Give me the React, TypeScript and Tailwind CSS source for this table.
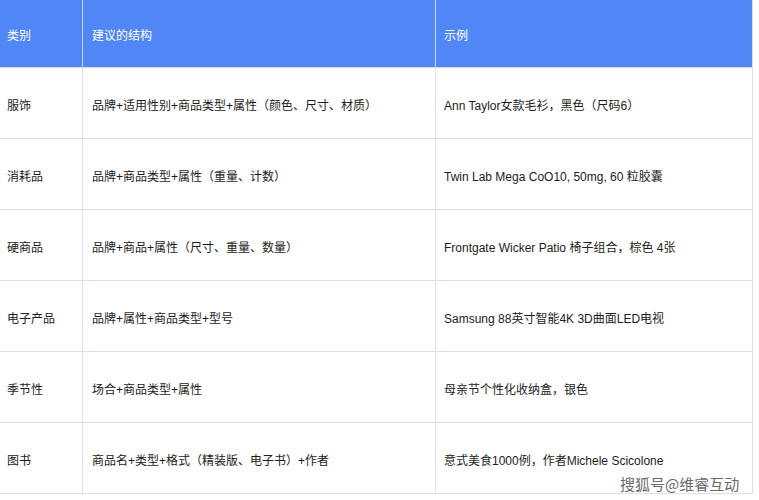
import React from "react";

const rows: [string, string, string][] = [
  ["服饰", "品牌+适用性别+商品类型+属性（颜色、尺寸、材质）", "Ann Taylor女款毛衫，黑色（尺码6）"],
  ["消耗品", "品牌+商品类型+属性（重量、计数）", "Twin Lab Mega CoO10, 50mg, 60 粒胶囊"],
  ["硬商品", "品牌+商品+属性（尺寸、重量、数量）", "Frontgate Wicker Patio 椅子组合，棕色 4张"],
  ["电子产品", "品牌+属性+商品类型+型号", "Samsung 88英寸智能4K 3D曲面LED电视"],
  ["季节性", "场合+商品类型+属性", "母亲节个性化收纳盒，银色"],
  ["图书", "商品名+类型+格式（精装版、电子书）+作者", "意式美食1000例，作者Michele Scicolone"],
];

export default function App() {
  return (
    <div
      className="relative w-[759px] h-[500px] bg-white overflow-hidden text-[12px] text-[#1c1c1c]"
      style={{ fontFamily: '"Liberation Sans", "Noto Sans CJK SC", sans-serif' }}
    >
      <div className="w-[753px] grid grid-cols-[83px_353px_317px]">
        <div className="h-[68px] bg-[#5086f6] text-white flex items-center pt-[4px] pl-[7px] border-r border-r-[#c9d6f5] border-b border-b-[#d9dce4]">类别</div>
        <div className="h-[68px] bg-[#5086f6] text-white flex items-center pt-[4px] pl-[9px] border-r border-r-[#c9d6f5] border-b border-b-[#d9dce4]">建议的结构</div>
        <div className="h-[68px] bg-[#5086f6] text-white flex items-center pt-[4px] pl-[8px] border-r border-r-[#d9dce4] border-b border-b-[#d9dce4]">示例</div>
        {rows.map((r, i) => (
          <React.Fragment key={i}>
            <div className="h-[71px] flex items-center pt-[6px] pl-[7px] border-r border-b border-[#dfe0e5]">{r[0]}</div>
            <div className="h-[71px] flex items-center pt-[6px] pl-[9px] border-r border-b border-[#dfe0e5]">{r[1]}</div>
            <div className="h-[71px] flex items-center pt-[6px] pl-[8px] border-r border-b border-[#dfe0e5]">{r[2]}</div>
          </React.Fragment>
        ))}
      </div>
      <div
        className="absolute left-[620px] top-[474px] text-[15px] leading-[20px] text-[#6a6a6a]"
        style={{ fontFamily: '"Noto Sans CJK SC", sans-serif', textShadow: "0 0 2px #fff, 0 0 2px #fff" }}
      >
        搜狐号@维睿互动
      </div>
    </div>
  );
}
